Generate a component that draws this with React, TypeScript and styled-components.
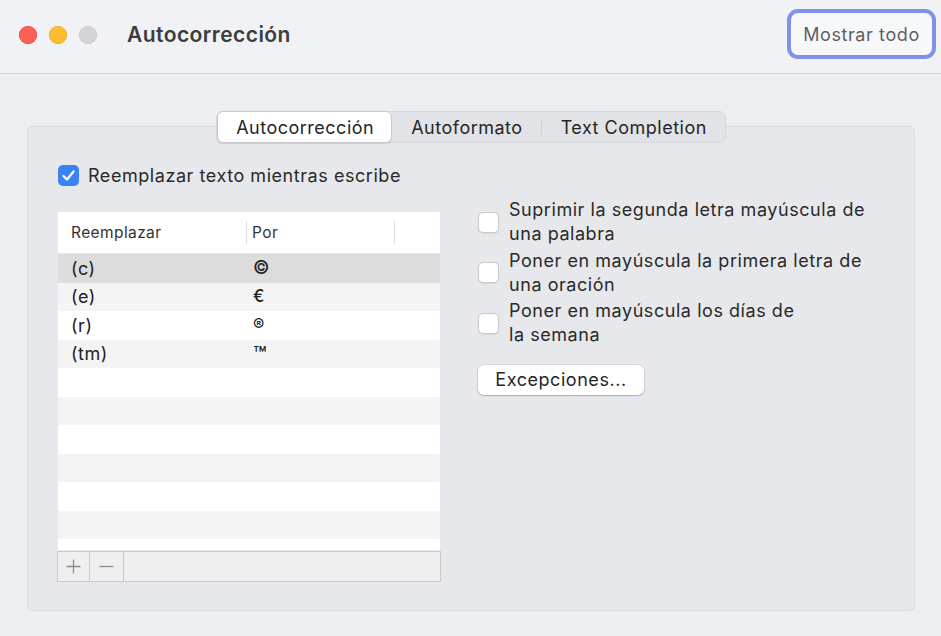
import React from 'react';
import styled, { createGlobalStyle } from 'styled-components';

const GlobalStyle = createGlobalStyle`
  html, body {
    margin: 0;
    padding: 0;
    background: #eceef2;
    font-family: Inter, "Noto Sans", "Liberation Sans", sans-serif;
    letter-spacing: 0.55px;
    color: #262626;
  }
`;

const Window = styled.div`
  width: 941px;
  height: 636px;
  display: flex;
  flex-direction: column;
  background: #eceef2;
  overflow: hidden;
`;

const TitleBar = styled.header`
  height: 74px;
  flex-shrink: 0;
  box-sizing: border-box;
  display: flex;
  align-items: center;
  padding: 0 5px 5px 19px;
  background: #f0f2f6;
  border-bottom: 1px solid #d2d3d6;
`;

const Lights = styled.div`
  display: flex;
  gap: 12px;
  margin-top: 2px;
`;

const Light = styled.span<{ $color: string; $edge: string }>`
  width: 18px;
  height: 18px;
  border-radius: 50%;
  background: ${(p) => p.$color};
  box-shadow: inset 0 0 0 0.5px ${(p) => p.$edge};
`;

const Title = styled.h1`
  margin: 0 0 0 30px;
  font-size: 21px;
  font-weight: 600;
  color: #3d3d3d;
  letter-spacing: 0.45px;
  flex: 1;
`;

const ShowAllButton = styled.button`
  height: 50px;
  width: 149px;
  border: 4px solid #7f92e6;
  border-radius: 11px;
  background: #f7f8fa;
  font-family: inherit;
  font-size: 18px;
  letter-spacing: 0.6px;
  color: #5f5f62;
  padding: 0;
`;

const Content = styled.main`
  flex: 1;
  display: flex;
  flex-direction: column;
  align-items: center;
  padding: 37px 26px 0 27px;
`;

const TabBar = styled.div`
  position: relative;
  z-index: 1;
  display: flex;
  align-items: center;
  height: 32px;
  box-sizing: border-box;
  background: #e2e3e6;
  border: 1px solid #d6d7da;
  border-radius: 7px;
`;

const Tab = styled.div<{ $active?: boolean }>`
  height: 32px;
  box-sizing: border-box;
  display: flex;
  align-items: center;
  padding: 0 17px 0 18px;
  margin: -1px 0;
  font-size: 18px;
  letter-spacing: 0.5px;
  color: #262626;
  background: ${(p) => (p.$active ? '#ffffff' : 'transparent')};
  border-radius: 6px;
  border: ${(p) => (p.$active ? '1px solid #c9c9cc' : '1px solid transparent')};
  box-shadow: ${(p) => (p.$active ? '0 1px 1px rgba(0,0,0,0.12)' : 'none')};
`;

const TabDivider = styled.span`
  width: 1px;
  height: 16px;
  background: #cfd0d3;
`;

const Panel = styled.section`
  width: 100%;
  box-sizing: border-box;
  height: 485px;
  margin-top: -17px;
  background: #e7e8eb;
  border: 1px solid #dadbde;
  border-radius: 6px;
  padding: 38px 30px 0 30px;
`;

const CheckRow = styled.label`
  display: flex;
  align-items: center;
  gap: 9px;
  font-size: 18px;
  color: #2a2a2a;
`;

const Box = styled.span<{ $checked?: boolean }>`
  width: 21px;
  height: 21px;
  flex-shrink: 0;
  box-sizing: border-box;
  border-radius: 5px;
  display: flex;
  align-items: center;
  justify-content: center;
  background: ${(p) => (p.$checked ? '#3a82f7' : '#ffffff')};
  border: ${(p) => (p.$checked ? 'none' : '1px solid #cacacd')};
  box-shadow: ${(p) => (p.$checked ? 'none' : '0 0.5px 1px rgba(0,0,0,0.08)')};
`;

const Columns = styled.div`
  display: flex;
  margin-top: 26px;
`;

const TableWrap = styled.div`
  width: 382px;
  flex-shrink: 0;
  display: flex;
  flex-direction: column;
`;

const Table = styled.div`
  background: #ffffff;
  height: 338px;
  overflow: hidden;
`;

const HeaderRow = styled.div`
  display: grid;
  grid-template-columns: 189px 148px 1fr;
  height: 41px;
  align-items: center;
  border-bottom: 1px solid #e6e6e6;
  font-size: 15.5px;
  letter-spacing: 0.4px;
  color: #333;
`;

const HeaderCell = styled.div<{ $divider?: boolean; $pad?: number }>`
  height: 23px;
  display: flex;
  align-items: center;
  padding-left: ${(p) => p.$pad ?? 13}px;
  box-sizing: border-box;
  border-right: ${(p) => (p.$divider ? '1px solid #dedede' : 'none')};
`;

const Row = styled.div<{ $tone: 'sel' | 'alt' | 'plain' }>`
  display: grid;
  grid-template-columns: 189px 1fr;
  height: 28.5px;
  align-items: center;
  color: #222;
  background: ${(p) => (p.$tone === 'sel' ? '#dcdcdc' : p.$tone === 'alt' ? '#f4f4f4' : '#ffffff')};
`;

const Cell = styled.div`
  padding-left: 13px;
  font-size: 18px;
`;

const SymbolCell = styled.div<{ $size: number }>`
  padding-left: 6px;
  font-size: ${(p) => p.$size}px;
  font-weight: 500;
  line-height: 1;
`;

const BottomBar = styled.div`
  display: flex;
  height: 31px;
  margin: 1px -1px 0;
  box-sizing: border-box;
  background: #efefef;
  border: 1px solid #c9c9c9;
`;

const BarButton = styled.div<{ $w: number }>`
  width: ${(p) => p.$w}px;
  display: flex;
  align-items: center;
  justify-content: center;
  border-right: 1px solid #c9c9c9;
`;

const Options = styled.div`
  margin-left: 38px;
  margin-top: -14px;
  display: flex;
  flex-direction: column;
  gap: 2.5px;
`;

const Option = styled.label`
  display: flex;
  align-items: center;
  gap: 10px;
  font-size: 18px;
  line-height: 24px;
  color: #2a2a2a;
`;

const PushButton = styled.button`
  align-self: flex-start;
  margin-top: 15px;
  width: 166px;
  height: 30px;
  padding: 0;
  border: none;
  border-radius: 6px;
  background: #ffffff;
  box-shadow: 0 0 0 0.5px rgba(0, 0, 0, 0.15), 0 1px 1.5px rgba(0, 0, 0, 0.2);
  font-family: inherit;
  font-size: 18px;
  letter-spacing: 0.55px;
  color: #262626;
`;

const rows: { from: string; to: string; size: number }[] = [
  { from: '(c)', to: '©', size: 18 },
  { from: '(e)', to: '€', size: 17 },
  { from: '(r)', to: '®', size: 17 },
  { from: '(tm)', to: '™', size: 22 },
  ...Array.from({ length: 8 }, () => ({ from: '', to: '', size: 17 })),
];

const Check = () => (
  <svg width="13" height="11" viewBox="0 0 13 11">
    <path d="M1.5 6 L5 9.5 L11.5 1.5" fill="none" stroke="#fff" strokeWidth="2.3" strokeLinecap="round" strokeLinejoin="round" />
  </svg>
);

const App: React.FC = () => {
  return (
    <Window>
      <GlobalStyle />
      <TitleBar>
        <Lights>
          <Light $color="#fe5f57" $edge="#e0443e" />
          <Light $color="#febc2e" $edge="#dea123" />
          <Light $color="#d4d4d6" $edge="#c2c2c4" />
        </Lights>
        <Title>Autocorrección</Title>
        <ShowAllButton>Mostrar todo</ShowAllButton>
      </TitleBar>
      <Content>
        <TabBar>
          <Tab $active>Autocorrección</Tab>
          <Tab>Autoformato</Tab>
          <TabDivider />
          <Tab>Text Completion</Tab>
        </TabBar>
        <Panel>
          <CheckRow>
            <Box $checked>
              <Check />
            </Box>
            Reemplazar texto mientras escribe
          </CheckRow>
          <Columns>
            <TableWrap>
              <Table>
                <HeaderRow>
                  <HeaderCell $divider>Reemplazar</HeaderCell>
                  <HeaderCell $divider $pad={5}>Por</HeaderCell>
                  <HeaderCell />
                </HeaderRow>
                {rows.map((r, i) => (
                  <Row key={i} $tone={i === 0 ? 'sel' : i % 2 === 1 ? 'alt' : 'plain'}>
                    <Cell>{r.from}</Cell>
                    <SymbolCell $size={r.size}>{r.to}</SymbolCell>
                  </Row>
                ))}
              </Table>
              <BottomBar>
                <BarButton $w={31}>
                  <svg width="17" height="17" viewBox="0 0 17 17">
                    <path d="M8.5 1.5 V15.5 M1.5 8.5 H15.5" stroke="#8c8c8c" strokeWidth="1.3" />
                  </svg>
                </BarButton>
                <BarButton $w={33}>
                  <svg width="17" height="17" viewBox="0 0 17 17">
                    <path d="M1.5 8.5 H15.5" stroke="#8c8c8c" strokeWidth="1.3" />
                  </svg>
                </BarButton>
              </BottomBar>
            </TableWrap>
            <Options>
              <Option>
                <Box />
                <span>
                  Suprimir la segunda letra mayúscula de
                  <br />
                  una palabra
                </span>
              </Option>
              <Option>
                <Box />
                <span>
                  Poner en mayúscula la primera letra de
                  <br />
                  una oración
                </span>
              </Option>
              <Option>
                <Box />
                <span>
                  Poner en mayúscula los días de
                  <br />
                  la semana
                </span>
              </Option>
              <PushButton>Excepciones...</PushButton>
            </Options>
          </Columns>
        </Panel>
      </Content>
    </Window>
  );
};

export default App;
